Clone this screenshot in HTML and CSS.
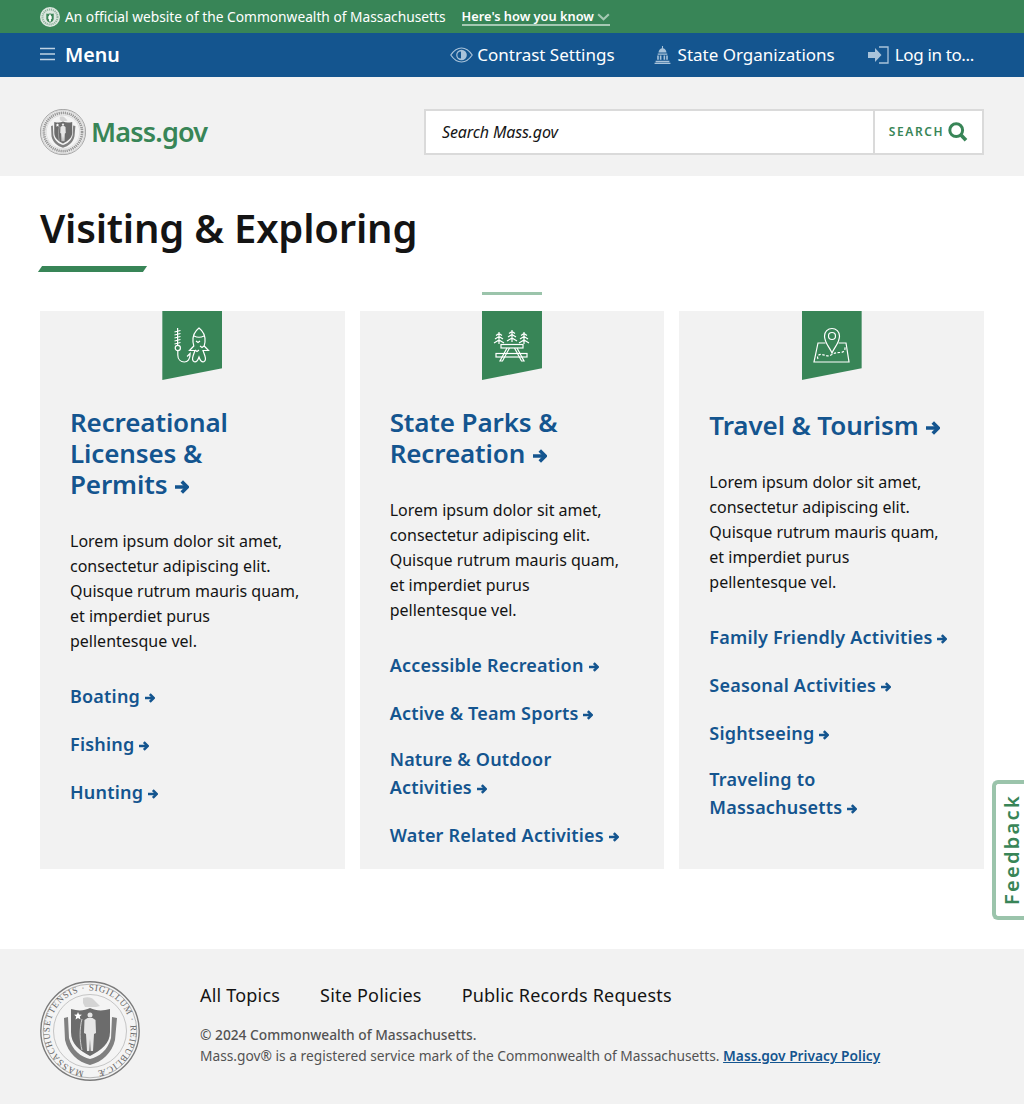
FILE: index.html
```html
<!DOCTYPE html>
<html lang="en">
<head>
<meta charset="utf-8">
<title>Visiting &amp; Exploring | Mass.gov</title>
<link rel="stylesheet" href="styles.css">
</head>
<body>
<svg class="defs" width="0" height="0" aria-hidden="true">
  <defs>
    <symbol id="arrow" viewBox="0 0 12 12"><path d="M0 6h9.500" fill="none" stroke="currentColor" stroke-width="3"/><path d="M5.800 1.300L10.500 6l-4.700 4.700" fill="none" stroke="currentColor" stroke-width="3"/></symbol>
    <symbol id="seal" viewBox="0 0 100 100">
      <circle cx="50" cy="50" r="49.200" fill="#f4f4f4" stroke="#7b7b7b" stroke-width="1.400"/>
      <circle cx="50" cy="50" r="46.800" fill="none" stroke="#8a8a8a" stroke-width=".6"/>
      <circle cx="50" cy="50" r="36.500" fill="none" stroke="#a5a5a5" stroke-width=".6"/>
      <path d="M24 37l4-1 1 21c3 12 12 19 21 21 9-2 18-9 21-21l1-21 5 1-2 22c-3 13-13 22-25 25-12-3-22-12-25-25z" fill="#808080"/>
      <path d="M31 28c7 2 13 2 19-1 6 3 13 3 20 1v23c0 12-9 18-20 24-11-6-19-12-19-24z" fill="#6c6c6c"/>
      <circle cx="50" cy="34" r="2.500" fill="#e6e6e6"/>
      <path d="M47.500 37h5l3 2 .5 13-2 1-1 17h-2.300l-.7-12-.7 12H47l-1-17-2-1 .5-13z" fill="#e6e6e6"/>
      <path d="M42 38c-2.500 9-2.500 22 0 31" fill="none" stroke="#e6e6e6" stroke-width=".8"/>
      <path d="M38 31l1.100 2.600 2.800.2-2.100 1.800.7 2.800-2.500-1.500-2.500 1.500.7-2.800-2.100-1.800 2.800-.2z" fill="#fff"/>
      <path d="M43 17c4-1.500 9-1 11 2l6 6-4 1H45l-2-4z" fill="#d4d4d4"/>
    </symbol>
  </defs>
</svg>

<div class="official">
  <svg class="official-seal" viewBox="0 0 20 20" aria-hidden="true">
    <circle cx="10" cy="10" r="10" fill="#dde8e0"/>
    <circle cx="10" cy="10" r="7.500" fill="none" stroke="#8fb29d" stroke-width="2" stroke-dasharray="1.200 .8"/>
    <path d="M6.300 6.500c1.300.5 2.600.5 3.700-.2 1.100.7 2.400.7 3.700.2v5.200c0 2-1.700 3-3.700 4-2-1-3.700-2-3.700-4z" fill="#3e8558"/>
    <path d="M9.300 7.500h1.400l.3 1.500.7.300v2.700l-.8.200v2.300H9.100v-2.300l-.8-.2V9.300l.7-.3z" fill="#fff"/>
  </svg>
  <span class="official-text">An official website of the Commonwealth of Massachusetts</span>
  <a class="official-link">Here's how you know
    <svg class="official-chevron" viewBox="0 0 14 9" aria-hidden="true"><path d="M1 1.500l6 5.500 6-5.500" fill="none" stroke="currentColor" stroke-width="2.400"/></svg>
  </a>
</div>

<nav class="utility">
  <a class="menu">
    <svg class="menu-icon" viewBox="0 0 16 14" aria-hidden="true"><path d="M0 1.500h15M0 7h15M0 12.500h15" stroke="currentColor" stroke-width="1.700"/></svg>
    Menu
  </a>
  <div class="utility-links">
    <a class="utility-link utility-contrast">
      <svg class="icon-eye" viewBox="0 0 23 16" aria-hidden="true"><path d="M.8 8C4 3.200 7.500 1 11.500 1s7.500 2.200 10.700 7c-3.200 4.800-6.700 7-10.700 7S4 12.800.8 8z" fill="none" stroke="currentColor" stroke-width="1.200"/><circle cx="11.500" cy="8" r="5.300" fill="currentColor"/><path d="M11 4.400a3.600 3.600 0 0 0 0 7.200z" fill="#14558f"/></svg>
      Contrast Settings
    </a>
    <a class="utility-link utility-orgs">
      <svg class="icon-capitol" viewBox="0 0 16 17" aria-hidden="true"><path d="M7.500 0h1v2.200c2 .5 3 2 3.300 4H4.200C4.500 4.200 5.500 2.700 7.500 2.200zM3.500 7h9v1.200h-9zM3 9h1.500v4H3zm2.500 0H7v4H5.500zM9 9h1.500v4H9zm2.500 0H13v4h-1.500zM1.500 14h13v1.300h-13zM.5 15.800h15V17H.5z" fill="currentColor"/></svg>
      State Organizations
    </a>
    <a class="utility-link utility-login">
      <svg class="icon-login" viewBox="0 0 21 18" aria-hidden="true"><path d="M0 6h7V2l6.500 7L7 16v-4H0z" fill="currentColor"/><path d="M11 1h9v16h-9" fill="none" stroke="currentColor" stroke-width="1.300"/></svg>
      Log in to...
    </a>
  </div>
</nav>

<header class="masthead">
  <a class="brand">
    <svg class="brand-seal" viewBox="0 0 100 100" aria-hidden="true">
      <use href="#seal"/>
      <circle cx="50" cy="50" r="41.500" fill="none" stroke="#9a9a9a" stroke-width="6" stroke-dasharray="3 1.500"/>
    </svg>
    <span class="brand-name">Mass.gov</span>
  </a>
  <form class="search">
    <span class="search-field">Search Mass.gov</span>
    <span class="search-button">
      <span class="search-label">Search</span>
      <svg class="search-icon" viewBox="0 0 20 20" aria-hidden="true"><circle cx="8.200" cy="8.200" r="6.400" fill="none" stroke="currentColor" stroke-width="3"/><path d="M12.500 12.500l5.500 5.800" stroke="currentColor" stroke-width="3.600"/></svg>
    </span>
  </form>
</header>

<main class="page">
  <h1 class="page-title">Visiting &amp; Exploring</h1>
  <div class="title-rule"></div>
  <div class="section-rule"></div>
  <div class="cards">
    <article class="card">
      <div class="ribbon">
        <svg class="ribbon-icon" viewBox="0 0 40 40" aria-hidden="true"><g fill="none" stroke="#fff" stroke-width="1.200">
          <path d="M5.600 1v17.500M2.500 5l6-1.500M2.500 8l6-1.500M2.500 11l6-1.500M2.500 14l6-1.500M2.500 17l6-1.500"/>
          <circle cx="5.800" cy="21" r="2.600"/>
          <path d="M5.800 23.600v4.400c0 4.500 3 7 6.500 7 3.500 0 6-3 5.800-8.500l-3 3"/>
          <path d="M27 1c-4 3-6.500 8-6 14l.8 4-4.300 4.500h5.500l-1.800 5c-1 3-.6 5.500 1 6.300 2 .6 3.500-1 4.800-4.800 1.300 3.800 2.800 5.400 4.800 4.800 1.600-.8 2-3.300 1-6.300l-1.800-5h5.500L32.200 19l.8-4c.5-6-2-11-6-14z"/>
          <path d="M22 9c3 1.500 7 1.500 10 0M24 14l2 1.500 2-1.500M28 19l2 1.500 2-1.500M23 23l2 1.500 2-1.500"/>
        </g></svg>
      </div>
      <h2 class="card-title"><a>Recreational Licenses &amp; <span class="nowrap">Permits <svg class="arrow arrow-lg" aria-hidden="true"><use href="#arrow"/></svg></span></a></h2>
      <p class="card-text">Lorem ipsum dolor sit amet, consectetur adipiscing elit. Quisque rutrum mauris quam, et imperdiet purus pellentesque vel.</p>
      <ul class="links">
        <li><a><span class="nowrap">Boating <svg class="arrow" aria-hidden="true"><use href="#arrow"/></svg></span></a></li>
        <li><a><span class="nowrap">Fishing <svg class="arrow" aria-hidden="true"><use href="#arrow"/></svg></span></a></li>
        <li><a><span class="nowrap">Hunting <svg class="arrow" aria-hidden="true"><use href="#arrow"/></svg></span></a></li>
      </ul>
    </article>
    <article class="card">
      <div class="ribbon">
        <svg class="ribbon-icon" viewBox="0 0 40 40" aria-hidden="true"><g fill="none" stroke="#fff" stroke-width="1.200">
          <path d="M7 5v12M4 8.500l3-2 3 2M3 12l4-2.500 4 2.500M2 16l5-3 5 3M20 3v12M17 6.500l3-2 3 2M16 10l4-2.500 4 2.500M15 14l5-3 5 3M32 5v12M29 8.500l3-2 3 2M28 12l4-2.500 4 2.500M27 16l5-3 5 3"/>
          <rect x="9" y="17.500" width="22" height="3.500"/>
          <rect x="4" y="26.500" width="31" height="3.500"/>
          <path d="M15 21l-7 13h2.500l7-13M25 21l7 13h-2.500l-7-13M13 26.500h14"/>
        </g></svg>
      </div>
      <h2 class="card-title"><a>State Parks &amp; <span class="nowrap">Recreation <svg class="arrow arrow-lg" aria-hidden="true"><use href="#arrow"/></svg></span></a></h2>
      <p class="card-text">Lorem ipsum dolor sit amet, consectetur adipiscing elit. Quisque rutrum mauris quam, et imperdiet purus pellentesque vel.</p>
      <ul class="links">
        <li><a>Accessible <span class="nowrap">Recreation <svg class="arrow" aria-hidden="true"><use href="#arrow"/></svg></span></a></li>
        <li><a>Active &amp; Team <span class="nowrap">Sports <svg class="arrow" aria-hidden="true"><use href="#arrow"/></svg></span></a></li>
        <li class="link-wrapped"><a>Nature &amp; Outdoor <span class="nowrap">Activities <svg class="arrow" aria-hidden="true"><use href="#arrow"/></svg></span></a></li>
        <li><a class="nowrap">Water Related Activities <svg class="arrow" aria-hidden="true"><use href="#arrow"/></svg></a></li>
      </ul>
    </article>
    <article class="card card-short">
      <div class="ribbon">
        <svg class="ribbon-icon" viewBox="0 0 40 40" aria-hidden="true"><g fill="none" stroke="#fff" stroke-width="1.200">
          <path d="M20 26c-2.500-6-7.500-10-7.500-17a7.500 7.500 0 0 1 15 0c0 7-5 11-7.500 17z"/>
          <circle cx="20" cy="9" r="3.500"/>
          <path d="M13.500 16H6L2 35h35l-3-19h-7.500"/>
          <path d="M6 32c-1.500-3 1-5 4-4.500 3 .5 6 2.500 9 .5 3-2 6-2.500 9-2.500 3 0 5-1.500 5-4 0-1-.5-1.500-1-2" stroke-dasharray="2.500 1.500"/>
        </g></svg>
      </div>
      <h2 class="card-title"><a>Travel &amp; <span class="nowrap">Tourism <svg class="arrow arrow-lg" aria-hidden="true"><use href="#arrow"/></svg></span></a></h2>
      <p class="card-text">Lorem ipsum dolor sit amet, consectetur adipiscing elit. Quisque rutrum mauris quam, et imperdiet purus pellentesque vel.</p>
      <ul class="links">
        <li><a class="nowrap">Family Friendly Activities <svg class="arrow" aria-hidden="true"><use href="#arrow"/></svg></a></li>
        <li><a class="nowrap">Seasonal Activities <svg class="arrow" aria-hidden="true"><use href="#arrow"/></svg></a></li>
        <li><a class="nowrap">Sightseeing <svg class="arrow" aria-hidden="true"><use href="#arrow"/></svg></a></li>
        <li class="link-wrapped"><a>Traveling to <span class="nowrap">Massachusetts <svg class="arrow" aria-hidden="true"><use href="#arrow"/></svg></span></a></li>
      </ul>
    </article>
  </div>
</main>

<footer class="footer">
  <svg class="footer-seal" viewBox="0 0 100 100" aria-hidden="true">
    <use href="#seal"/>
    <path id="sealArc" d="M50 90.500A40.500 40.500 0 1 1 50.100 90.500" fill="none"/>
    <text class="seal-text"><textPath href="#sealArc" startOffset="6" textLength="240">MASSACHUSETTENSIS · SIGILLUM · REIPUBLICÆ</textPath></text>
  </svg>
  <div class="footer-body">
    <ul class="footer-nav">
      <li>All Topics</li>
      <li>Site Policies</li>
      <li>Public Records Requests</li>
    </ul>
    <p class="copyright"><strong>© 2024 Commonwealth of Massachusetts.</strong><br>Mass.gov® is a registered service mark of the Commonwealth of Massachusetts. <a class="privacy">Mass.gov Privacy Policy</a></p>
  </div>
</footer>

<a class="feedback"><span class="feedback-text">Feedback</span></a>
</body>
</html>
```

FILE: styles.css
```css
* { box-sizing: border-box; }
html, body { margin: 0; padding: 0; }
body {
  position: relative;
  font-family: "Noto Sans", sans-serif;
  color: #141414;
  background: #fff;
  font-size: 16px;
}
a { color: inherit; text-decoration: none; }
ul { list-style: none; margin: 0; padding: 0; }
h1, h2, p { margin: 0; }
.defs { position: absolute; }
.nowrap { white-space: nowrap; }

.official {
  height: 33px;
  background: #388557;
  color: #fff;
  display: flex;
  align-items: center;
  padding: 0 40px;
  font-size: 13.75px;
}
.official-seal { width: 20px; height: 20px; margin-right: 5px; }
.official-link {
  margin-left: 16px;
  font-size: 12.8px;
  font-weight: 600;
  border-bottom: 2px solid #a5c9b3;
  line-height: 15px;
  display: flex;
  align-items: center;
  gap: 3px;
  margin-top: 2px;
}
.official-chevron { width: 13px; height: 8px; color: #a5c9b3; }

.utility {
  height: 44px;
  background: #14558f;
  color: #fff;
  display: flex;
  align-items: center;
  justify-content: space-between;
  padding: 0 50px 2px 40px;
}
.menu { display: flex; align-items: center; font-size: 19.6px; font-weight: 600; }
.menu-icon { width: 16px; height: 14px; margin-right: 9px; color: #bfd3e4; }
.utility-links { display: flex; align-items: center; }
.utility-link { display: flex; align-items: center; font-size: 17px; }
.utility-link svg { color: #a9c3da; margin-top: 2px; }
.utility-orgs { margin-left: 39px; }
.utility-login { margin-left: 33px; letter-spacing: -.35px; }
.icon-eye { width: 23px; height: 16px; margin-right: 4px; }
.icon-capitol { width: 17px; height: 18px; margin-right: 7px; }
.icon-login { width: 21px; height: 18px; margin-right: 6px; }

.masthead {
  height: 99px;
  background: #f2f2f2;
  padding: 10px 40px 0;
  display: flex;
  align-items: center;
  justify-content: space-between;
}
.brand { display: flex; align-items: center; }
.brand-seal { width: 46px; height: 46px; margin-right: 5px; }
.brand-name { font-size: 27px; font-weight: 600; color: #388557; letter-spacing: -.8px; }
.search {
  width: 560px;
  height: 46px;
  display: flex;
  background: #fff;
  border: 2px solid #dadada;
}
.search-field {
  flex: 1;
  display: flex;
  align-items: center;
  padding-left: 16px;
  font-style: italic;
  letter-spacing: -.13px;
}
.search-button {
  width: 109px;
  border-left: 2px solid #dadada;
  display: flex;
  align-items: center;
  justify-content: center;
  gap: 4px;
  color: #388557;
}
.search-label { font-size: 12px; font-weight: 600; letter-spacing: 1.6px; text-transform: uppercase; }
.search-icon { width: 20px; height: 20px; }

.page { padding: 26px 40px 80px; }
.page-title { font-size: 40px; font-weight: 600; line-height: 52px; letter-spacing: -.2px; }
.title-rule {
  width: 105px;
  height: 6px;
  background: #388557;
  margin-top: 12px;
  transform: skewX(-35deg);
}
.section-rule {
  width: 60px;
  height: 3px;
  background: #9bc4ab;
  margin: 20px auto 16px;
}
.cards { display: grid; grid-template-columns: repeat(3, minmax(0, 1fr)); gap: 15px; }
.card { background: #f2f2f2; padding: 0 37px 18px 30px; min-width: 0; }
.ribbon {
  width: 60px;
  height: 69px;
  margin: 0 0 27px calc(50% - 26.5px);
  background: #388557;
  clip-path: polygon(0 0, 100% 0, 100% 83%, 0 100%);
  display: flex;
  justify-content: center;
  padding-top: 16px;
}
.ribbon-icon { width: 40px; height: 40px; }
.card-short .card-title { padding-top: 3px; }
.card-title { font-size: 26px; font-weight: 600; line-height: 31px; color: #14558f; letter-spacing: -.12px; }
.arrow { width: 10px; height: 10px; display: inline-block; vertical-align: 0; }
.arrow-lg { width: 14px; height: 14px; margin-left: 1px; vertical-align: 0; }
.card-text { margin-top: 29px; line-height: 25px; }
.links {
  margin-top: 26px;
  display: flex;
  flex-direction: column;
  gap: 16px;
  color: #14558f;
  font-size: 18px;
  font-weight: 600;
  line-height: 28px;
  letter-spacing: .2px;
}
.links li { min-height: 32px; display: flex; align-items: center; }
.links .link-wrapped { padding-bottom: 2px; }

.footer {
  height: 155px;
  background: #f2f2f2;
  display: flex;
  padding: 32px 40px 0;
}
.footer-seal { width: 100px; height: 100px; margin-right: 60px; flex: none; }
.seal-text { font-family: "Liberation Serif", serif; font-size: 9px; fill: #666; }
.footer-nav { display: flex; gap: 40px; font-size: 18px; line-height: 28px; letter-spacing: .2px; }
.copyright { margin-top: 15px; font-size: 13.75px; line-height: 21px; color: #535353; }
.copyright strong { font-weight: 500; }
.privacy { color: #14558f; font-weight: 600; text-decoration: underline; }

.feedback {
  position: absolute;
  right: 0;
  top: 780px;
  width: 32px;
  height: 140px;
  padding-left: 3px;
  background: #fff;
  border: 4px solid #9bc4ab;
  border-right: 0;
  border-radius: 6px 0 0 6px;
  color: #388557;
  display: flex;
  align-items: center;
  justify-content: center;
}
.feedback-text {
  font-size: 20px;
  font-weight: 600;
  letter-spacing: 2.3px;
  writing-mode: vertical-rl;
  transform: rotate(180deg);
}
```
